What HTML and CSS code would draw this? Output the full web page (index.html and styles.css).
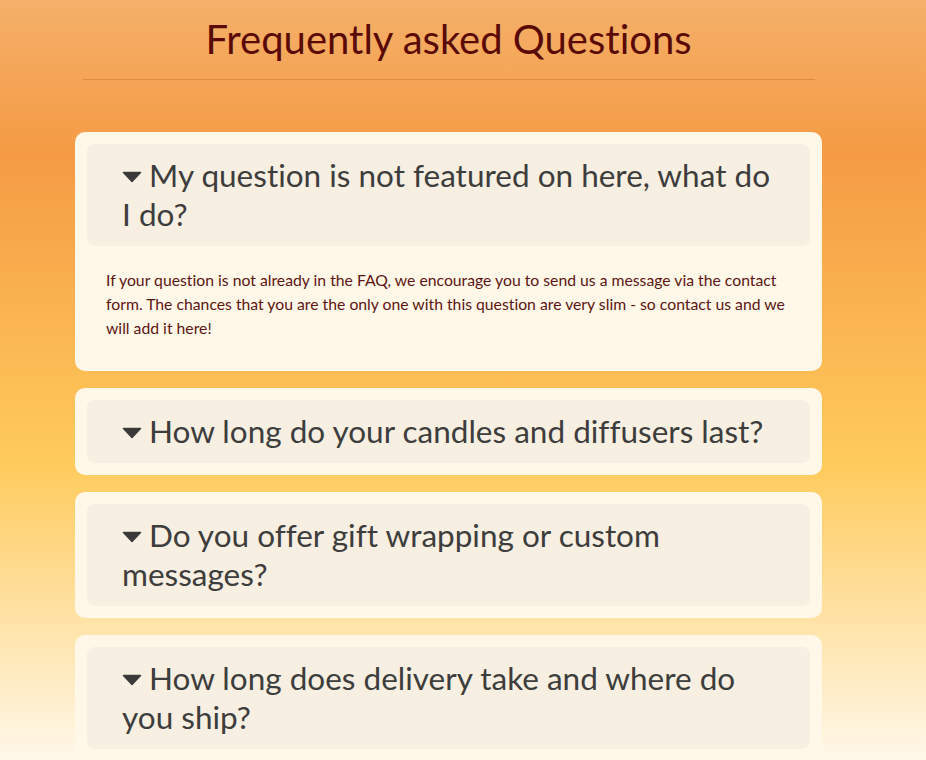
FILE: index.html
```html
<!DOCTYPE html>
<html lang="en">
<head>
<meta charset="utf-8">
<title>FAQ</title>
<link rel="stylesheet" href="styles.css">
</head>
<body>
<main class="page">
  <h1 class="title">Frequently asked Questions</h1>
  <hr class="rule">
  <section class="faq">
    <div class="card">
      <div class="question"><svg class="caret" width="20" height="12" viewBox="0 0 20 12"><path d="M1.5 1.5 H18.5 L10 10.5 Z" /></svg>My question is not featured on here, what do I do?</div>
      <p class="answer">If your question is not already in the FAQ, we encourage you to send us a message via the contact form. The chances that you are the only one with this question are very slim - so contact us and we will add it here!</p>
    </div>
    <div class="card">
      <div class="question"><svg class="caret" width="20" height="12" viewBox="0 0 20 12"><path d="M1.5 1.5 H18.5 L10 10.5 Z" /></svg>How long do your candles and diffusers last?</div>
    </div>
    <div class="card">
      <div class="question"><svg class="caret" width="20" height="12" viewBox="0 0 20 12"><path d="M1.5 1.5 H18.5 L10 10.5 Z" /></svg>Do you offer gift wrapping or custom messages?</div>
    </div>
    <div class="card">
      <div class="question"><svg class="caret" width="20" height="12" viewBox="0 0 20 12"><path d="M1.5 1.5 H18.5 L10 10.5 Z" /></svg>How long does delivery take and where do you ship?</div>
    </div>
  </section>
</main>
</body>
</html>
```
FILE: styles.css
```css
html, body {
  margin: 0;
  padding: 0;
}
body {
  min-height: 760px;
  font-family: Lato, "Open Sans", sans-serif;
  font-variant-ligatures: none;
  background: linear-gradient(to bottom, #f4b06a 0%, #f59b44 20%, #ffcb5c 61%, #fff8ea 100%);
  overflow: hidden;
}
.page {
  width: 747px;
  margin: 0 0 0 75px;
  padding-top: 14px;
}
.title {
  margin: 0;
  text-align: center;
  font-weight: 400;
  font-size: 40px;
  line-height: 50px;
  color: #5a0a06;
}
.rule {
  margin: 15px 7px 0 8px;
  border: 0;
  height: 1px;
  background: #dd8c48;
}
.faq {
  margin-top: 52px;
  display: flex;
  flex-direction: column;
  gap: 17px;
}
.card {
  background: #fff7e8;
  border-radius: 10px;
  padding: 12px;
}
.question {
  background: #f7efe1;
  border-radius: 8px;
  padding: 12px 24px 12px 35px;
  font-size: 31.5px;
  line-height: 39px;
  color: #3d3d3d;
}
.caret {
  display: inline-block;
  vertical-align: 4px;
  margin-right: 7px;
  fill: #3a3a3a;
  stroke: #3a3a3a;
  stroke-width: 1.5;
  stroke-linejoin: round;
}
.answer {
  margin: 0;
  padding: 22px 19px 19px;
  font-size: 15.75px;
  line-height: 24px;
  color: #5c1510;
}
```
